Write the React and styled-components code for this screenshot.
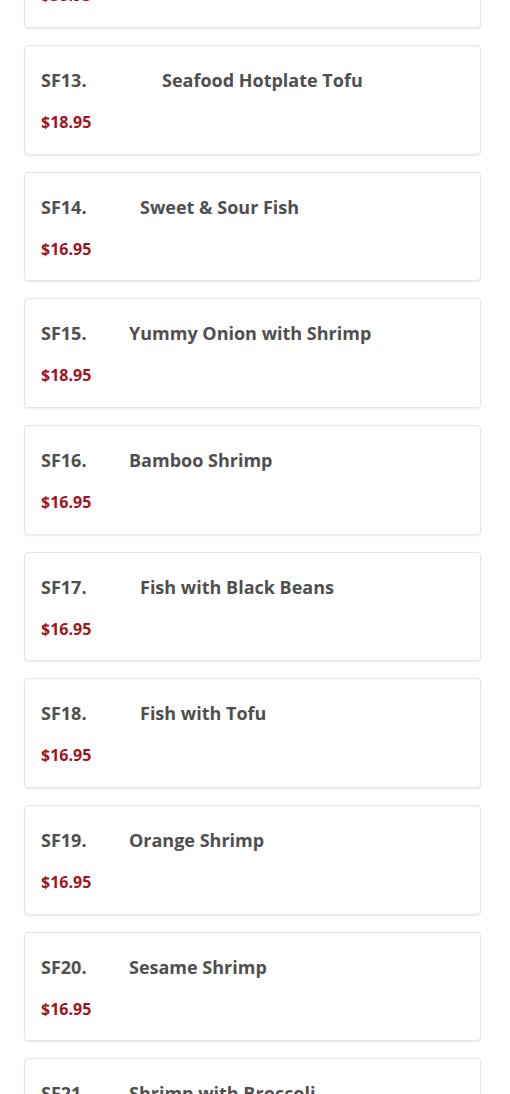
import styled, { createGlobalStyle } from 'styled-components';

const GlobalStyle = createGlobalStyle`
  body {
    margin: 0;
    background: #fff;
    font-family: "Open Sans", "Liberation Sans", sans-serif;
  }
`;

const Page = styled.div`
  padding: 0 29px 0 24px;
  margin-top: -81.67px;
`;

const Card = styled.div`
  box-sizing: border-box;
  height: 109.67px;
  margin-bottom: 17px;
  padding: 21px 16px 0;
  border: 1px solid #e6e6e6;
  border-radius: 4px;
  background: #fff;
  box-shadow: 0 1px 2px rgba(0, 0, 0, 0.08);
`;

const Title = styled.h3`
  margin: 0 0 16px;
  font-size: 18px;
  line-height: 27px;
  font-weight: 700;
  color: #4f4f4f;
  white-space: nowrap;
`;

const Code = styled.span`
  display: inline-block;
  width: 45px;
`;

const Name = styled.span`
  margin-left: ${props => props.$offset}px;
`;

const Price = styled.div`
  font-size: 16px;
  line-height: 24px;
  font-weight: 700;
  color: #a3131c;
`;

const items = [
  { code: 'SF12.', name: 'Seafood Deluxe', price: '$38.95', offset: 43 },
  { code: 'SF13.', name: 'Seafood Hotplate Tofu', price: '$18.95', offset: 76 },
  { code: 'SF14.', name: 'Sweet & Sour Fish', price: '$16.95', offset: 54 },
  { code: 'SF15.', name: 'Yummy Onion with Shrimp', price: '$18.95', offset: 43 },
  { code: 'SF16.', name: 'Bamboo Shrimp', price: '$16.95', offset: 43 },
  { code: 'SF17.', name: 'Fish with Black Beans', price: '$16.95', offset: 54 },
  { code: 'SF18.', name: 'Fish with Tofu', price: '$16.95', offset: 54 },
  { code: 'SF19.', name: 'Orange Shrimp', price: '$16.95', offset: 43 },
  { code: 'SF20.', name: 'Sesame Shrimp', price: '$16.95', offset: 43 },
  { code: 'SF21.', name: 'Shrimp with Broccoli', price: '$16.95', offset: 43 },
];

function App() {
  return (
    <>
      <GlobalStyle />
      <Page>
        {items.map(item => (
          <Card key={item.code}>
            <Title>
              <Code>{item.code}</Code>
              <Name $offset={item.offset}>{item.name}</Name>
            </Title>
            <Price>{item.price}</Price>
          </Card>
        ))}
      </Page>
    </>
  );
}

export default App;
